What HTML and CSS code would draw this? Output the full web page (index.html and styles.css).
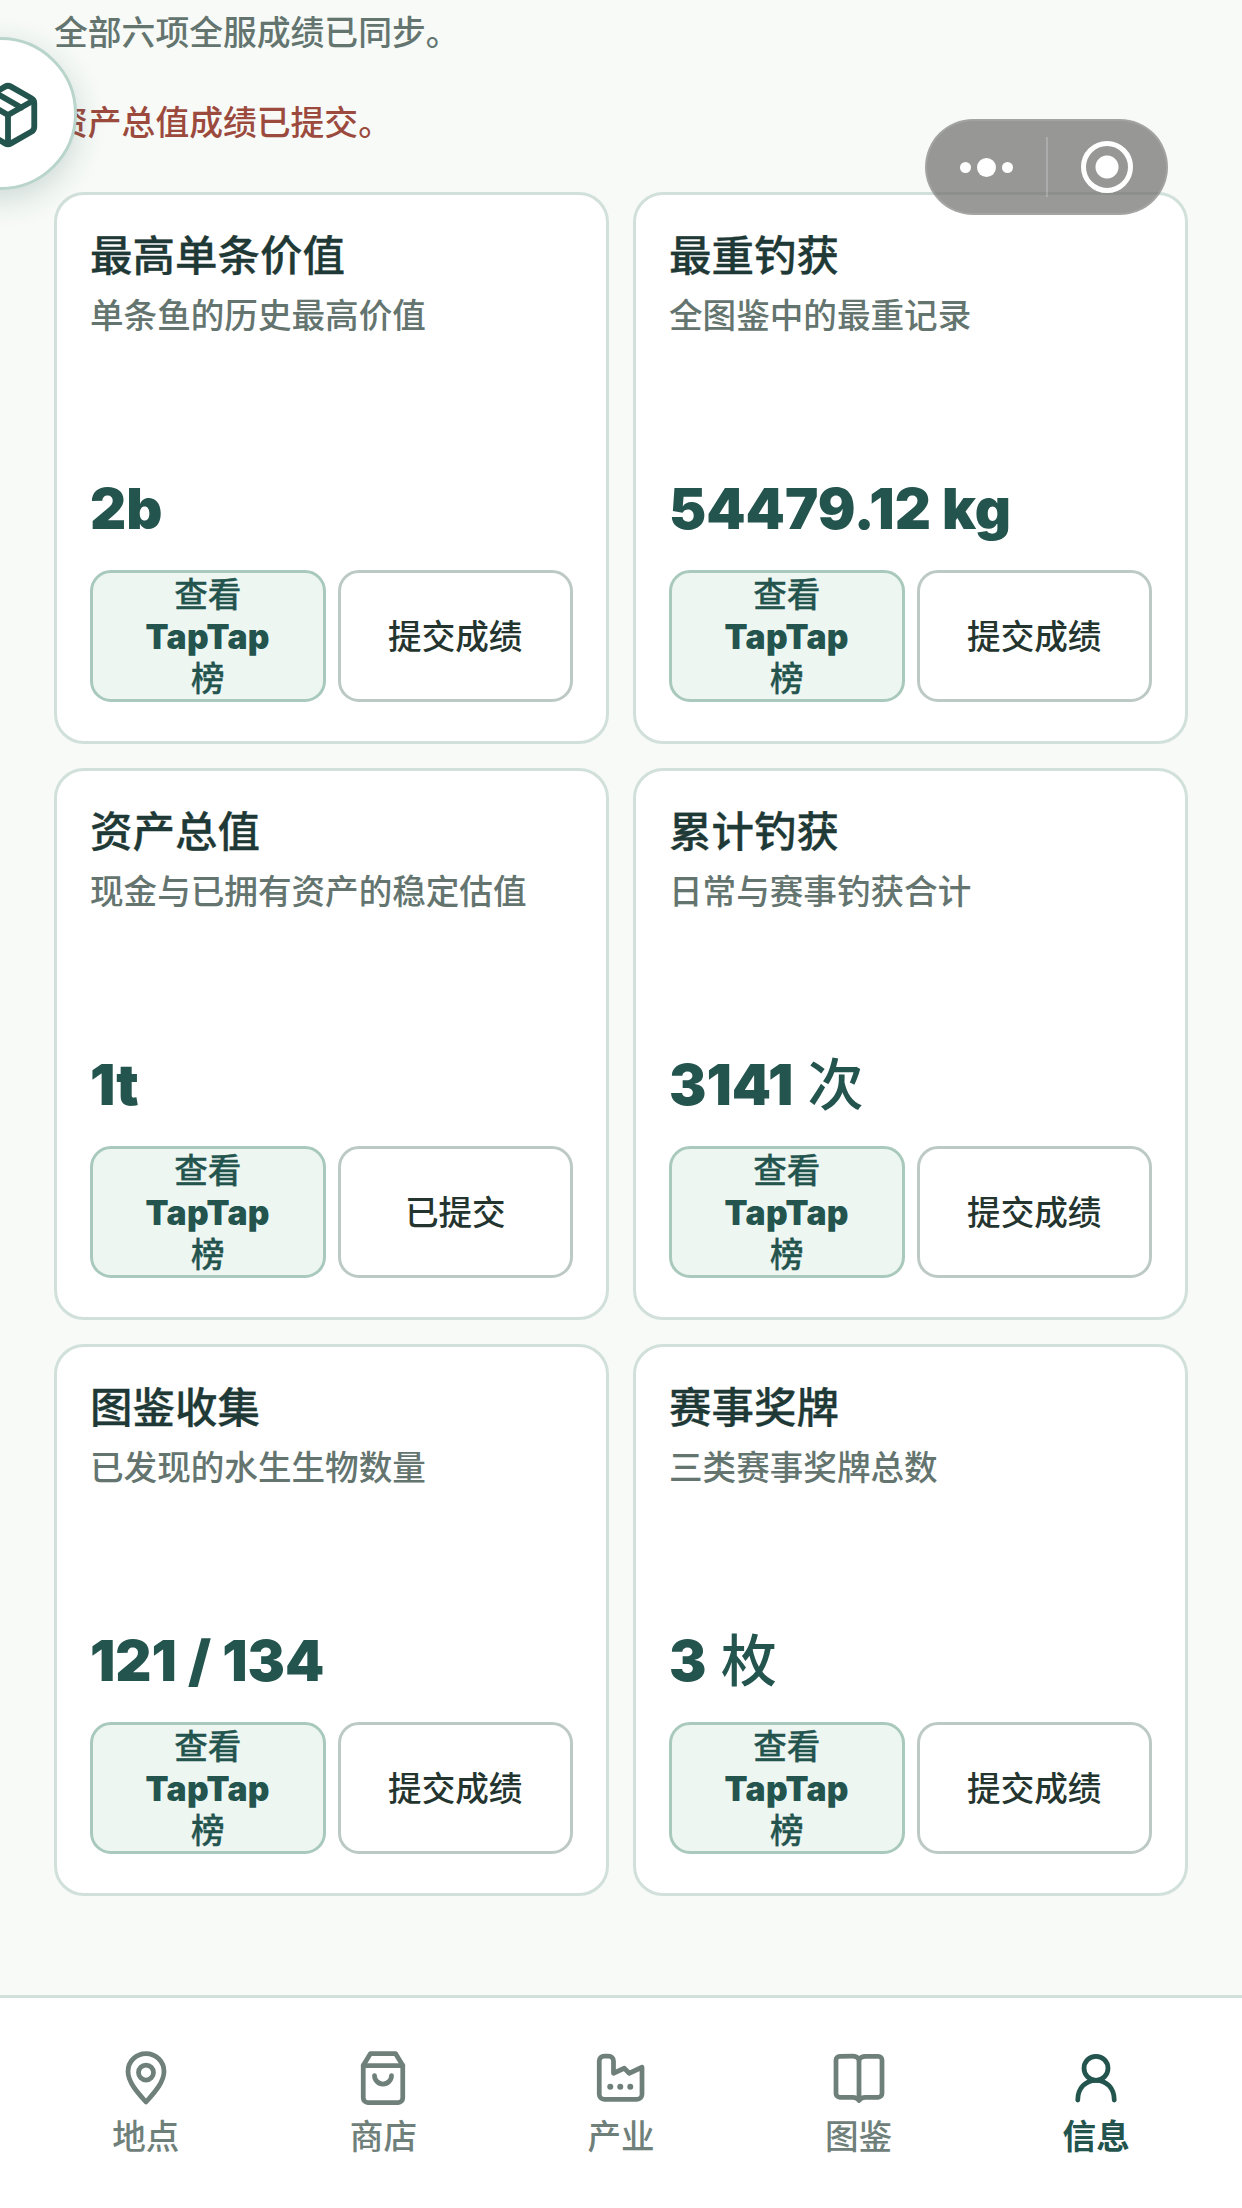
FILE: index.html
```html
<!DOCTYPE html>
<html>
  <head>
    <meta charset="UTF-8">
    <meta name="viewport" content="width=device-width,initial-scale=1">
    <title>信息</title>
    <link rel="stylesheet" href="styles.css">
  </head>
  <body>
    <main class="content">
      <p class="notice">全部六项全服成绩已同步。</p>
      <p class="notice notice-error">资产总值成绩已提交。</p>
      <section class="cards">
        <article class="card">
          <h3 class="card-title">最高单条价值</h3>
          <p class="card-sub">单条鱼的历史最高价值</p>
          <div class="card-value">2b</div>
          <div class="card-actions">
            <button class="btn btn-board">查看 <b>TapTap</b> 榜</button>
            <button class="btn">提交成绩</button>
          </div>
        </article>
        <article class="card">
          <h3 class="card-title">最重钓获</h3>
          <p class="card-sub">全图鉴中的最重记录</p>
          <div class="card-value">54479.12 kg</div>
          <div class="card-actions">
            <button class="btn btn-board">查看 <b>TapTap</b> 榜</button>
            <button class="btn">提交成绩</button>
          </div>
        </article>
        <article class="card">
          <h3 class="card-title">资产总值</h3>
          <p class="card-sub">现金与已拥有资产的稳定估值</p>
          <div class="card-value">1t</div>
          <div class="card-actions">
            <button class="btn btn-board">查看 <b>TapTap</b> 榜</button>
            <button class="btn">已提交</button>
          </div>
        </article>
        <article class="card">
          <h3 class="card-title">累计钓获</h3>
          <p class="card-sub">日常与赛事钓获合计</p>
          <div class="card-value">3141 <span class="unit">次</span></div>
          <div class="card-actions">
            <button class="btn btn-board">查看 <b>TapTap</b> 榜</button>
            <button class="btn">提交成绩</button>
          </div>
        </article>
        <article class="card">
          <h3 class="card-title">图鉴收集</h3>
          <p class="card-sub">已发现的水生生物数量</p>
          <div class="card-value">121 / 134</div>
          <div class="card-actions">
            <button class="btn btn-board">查看 <b>TapTap</b> 榜</button>
            <button class="btn">提交成绩</button>
          </div>
        </article>
        <article class="card">
          <h3 class="card-title">赛事奖牌</h3>
          <p class="card-sub">三类赛事奖牌总数</p>
          <div class="card-value">3 <span class="unit">枚</span></div>
          <div class="card-actions">
            <button class="btn btn-board">查看 <b>TapTap</b> 榜</button>
            <button class="btn">提交成绩</button>
          </div>
        </article>
      </section>
    </main>

    <nav class="tabbar">
      <div class="tab">
        <svg class="tab-icon" viewBox="0 0 24 24"><path d="M12 21.600c-3-3.400-7.200-7.800-7.200-12.200a7.200 7.200 0 0 1 14.400 0c0 4.400-4.200 8.800-7.200 12.200z"/><circle cx="12" cy="9.800" r="3"/></svg>
        <span>地点</span>
      </div>
      <div class="tab">
        <svg class="tab-icon" viewBox="0 0 24 24"><path d="M7 2.200h10l2.900 4.800v13a1.800 1.800 0 0 1-1.800 1.800H5.900a1.800 1.800 0 0 1-1.800-1.800V7z"/><path d="M4.100 7h15.800"/><path d="M8.600 11a3.400 3.400 0 0 0 6.800 0"/></svg>
        <span>商店</span>
      </div>
      <div class="tab">
        <svg class="tab-icon" viewBox="0 0 24 24"><path d="M3.300 5.200a2 2 0 0 1 2-2H7a2 2 0 0 1 2 2v4.900l4.300-2 2 2 5.100-2.400v10.800a2 2 0 0 1-2 2H5.300a2 2 0 0 1-2-2z"/><path class="tab-dots" d="M7.700 15.500h.01M11.700 15.500h.01M15.700 15.500h.01"/></svg>
        <span>产业</span>
      </div>
      <div class="tab">
        <svg class="tab-icon" viewBox="0 0 24 24"><path d="M12 4.500c-.6-.8-1.300-1.200-2.500-1.200H4.300A1.500 1.500 0 0 0 2.800 4.800v13.400a1.500 1.500 0 0 0 1.500 1.500h5.200c1.200 0 1.900.4 2.500 1.300.6-.9 1.300-1.300 2.500-1.300h5.200a1.500 1.500 0 0 0 1.500-1.500V4.800a1.500 1.500 0 0 0-1.500-1.500h-5.200c-1.200 0-1.900.4-2.500 1.200z"/><path d="M12 4.500v16"/></svg>
        <span>图鉴</span>
      </div>
      <div class="tab tab-active">
        <svg class="tab-icon" viewBox="0 0 24 24"><circle cx="12" cy="8.100" r="4.800"/><path d="M4.700 20.800c0-4.700 3.100-7.900 7.300-7.900s7.300 3.200 7.300 7.900"/></svg>
        <span>信息</span>
      </div>
    </nav>

    <button class="float-btn">
      <svg class="float-icon" viewBox="0 0 24 24"><path d="M11 21.730a2 2 0 0 0 2 0l7-4A2 2 0 0 0 21 16V8a2 2 0 0 0-1-1.730l-7-4a2 2 0 0 0-2 0l-7 4A2 2 0 0 0 3 8v8a2 2 0 0 0 1 1.730z"/><path d="M12 22V12"/><path d="M3.300 7 12 12l8.700-5"/><path d="m7.500 4.270 9 5.150"/></svg>
    </button>

    <div class="capsule">
      <div class="capsule-more"><i></i><i class="big"></i><i></i></div>
      <div class="capsule-line"></div>
      <div class="capsule-close"><i></i></div>
    </div>
  </body>
</html>
```

FILE: styles.css
```css
* {
  box-sizing: border-box;
}
html, body {
  margin: 0;
  height: 2208px;
  overflow: hidden;
}
body {
  display: flex;
  flex-direction: column;
  position: relative;
  background-color: #f7faf7;
  font-family: 'Inter', 'Noto Sans CJK SC', sans-serif;
  color: #24352f;
}
.content {
  flex: 1;
  padding: 12px 54px 0;
}
.notice {
  margin: 0 0 48px;
  font-size: 33.8px;
  line-height: 42px;
  font-weight: 500;
  color: #64756f;
}
.notice-error {
  color: #9c4a3e;
}
.cards {
  display: grid;
  grid-template-columns: 1fr 1fr;
  gap: 24px;
}
.card {
  display: flex;
  flex-direction: column;
  height: 552px;
  padding: 34px 33px 39px;
  background-color: white;
  border: 3px solid #d1e0da;
  border-radius: 30px;
}
.card-title {
  margin: 0;
  font-size: 42.5px;
  line-height: 54px;
  font-weight: 500;
  color: #1f3a36;
  -webkit-text-stroke: 0.3px #1f3a36;
}
.card-sub {
  margin: 12px 0 0;
  font-size: 33.6px;
  line-height: 42px;
  font-weight: 500;
  color: #64756f;
}
.card-value {
  margin-top: auto;
  font-size: 56px;
  line-height: 66px;
  font-weight: 900;
  color: #24544e;
}
.unit {
  font-weight: 500;
  margin-left: 3px;
}
.card-actions {
  display: flex;
  gap: 12px;
  margin-top: 28px;
}
.btn {
  flex: 1;
  height: 132px;
  padding: 1px 36px 0;
  font-family: inherit;
  font-size: 33.6px;
  line-height: 42px;
  font-weight: 500;
  color: #24352f;
  background-color: white;
  border: 3px solid #bcc9c4;
  border-radius: 21px;
}
.btn-board {
  color: #24544e;
  background-color: #eef6f2;
  border-color: #a9c9bd;
  -webkit-text-stroke: 0.3px #24544e;
}
.btn-board b {
  font-weight: 900;
  letter-spacing: 0.4px;
  -webkit-text-stroke: 0;
}
.tabbar {
  display: grid;
  grid-template-columns: repeat(5, 1fr);
  height: 213px;
  padding: 50px 27px 0;
  background-color: white;
  border-top: 3px solid #d1e0da;
}
.tab {
  display: flex;
  flex-direction: column;
  align-items: center;
  gap: 8px;
  font-size: 33.6px;
  line-height: 42px;
  font-weight: 500;
  color: #6f807a;
}
.tab-active {
  font-weight: 700;
  color: #24544e;
}
.tab-icon {
  width: 60px;
  height: 60px;
  fill: none;
  stroke: currentColor;
  stroke-width: 1.9;
  stroke-linecap: round;
  stroke-linejoin: round;
}
.tab-dots {
  stroke-width: 2.400;
}
.float-btn {
  position: absolute;
  left: -76px;
  top: 37px;
  width: 153px;
  height: 153px;
  display: flex;
  align-items: center;
  justify-content: center;
  padding: 3px 0 0 14px;
  background-color: white;
  border: 3px solid #b9d5cb;
  border-radius: 50%;
  box-shadow: 0 9px 30px rgba(36, 84, 78, 0.2);
}
.float-icon {
  flex: none;
  width: 70px;
  height: 70px;
  fill: none;
  stroke: #24544e;
  stroke-width: 2;
  stroke-linecap: round;
  stroke-linejoin: round;
}
.capsule {
  position: absolute;
  left: 925px;
  top: 119px;
  width: 243px;
  height: 96px;
  display: flex;
  align-items: center;
  background-color: rgba(110, 110, 108, 0.7);
  border: 2px solid rgba(255, 255, 255, 0.12);
  border-radius: 48px;
}
.capsule-more {
  width: 119px;
  display: flex;
  align-items: center;
  justify-content: center;
  gap: 6px;
}
.capsule-more i {
  width: 11px;
  height: 11px;
  background-color: white;
  border-radius: 50%;
}
.capsule-more .big {
  width: 19px;
  height: 19px;
}
.capsule-line {
  width: 2px;
  height: 60px;
  background-color: rgba(255, 255, 255, 0.2);
}
.capsule-close {
  flex: 1;
  display: flex;
  align-items: center;
  justify-content: center;
}
.capsule-close i {
  width: 52px;
  height: 52px;
  border: 5px solid white;
  border-radius: 50%;
  background: radial-gradient(circle, white 0 11px, transparent 12px);
}
```
